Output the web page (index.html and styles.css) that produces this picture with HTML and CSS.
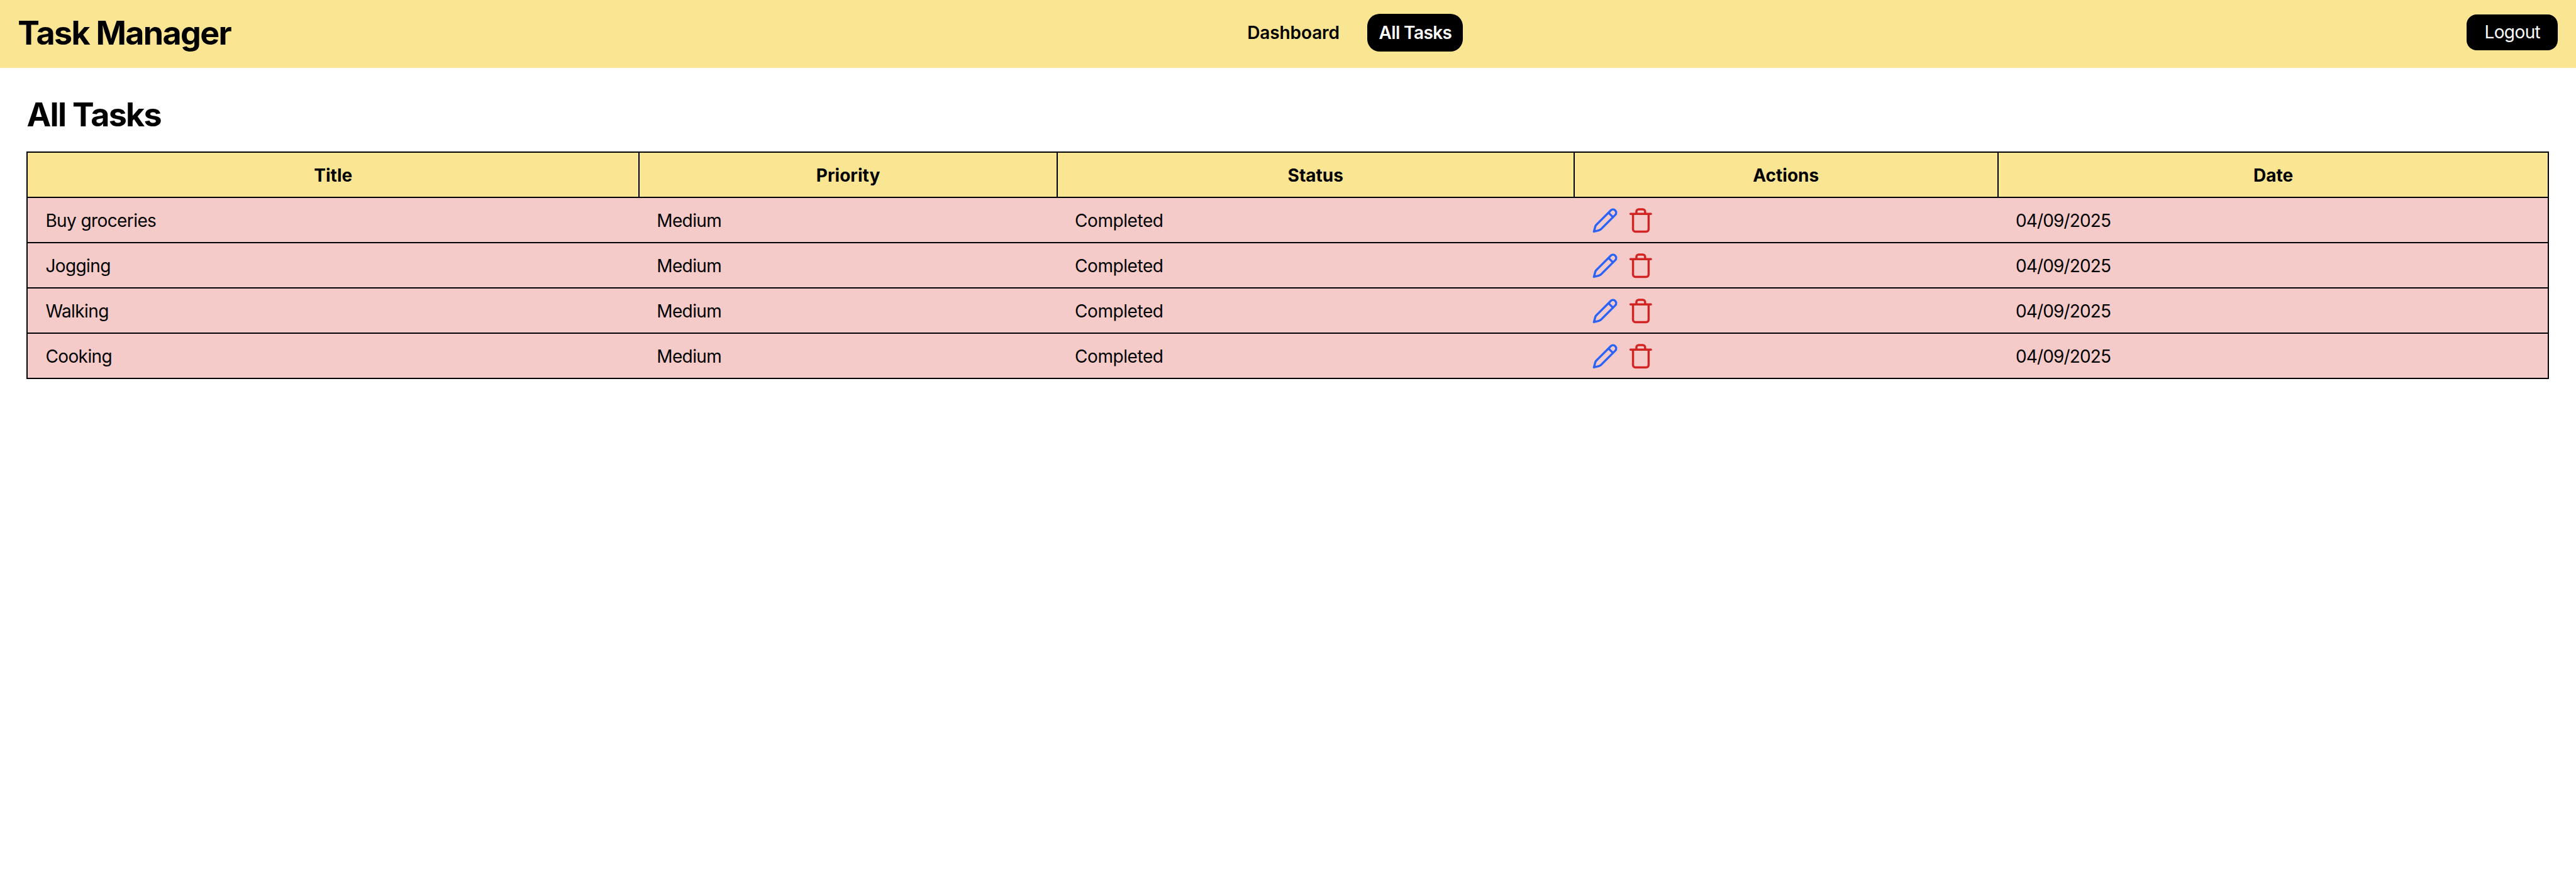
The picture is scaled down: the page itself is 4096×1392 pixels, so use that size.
FILE: index.html
```html
<!DOCTYPE html>
<html lang="en">
<head>
<meta charset="utf-8">
<title>Task Manager</title>
<link rel="stylesheet" href="styles.css">
</head>
<body>
<svg class="sprite" aria-hidden="true">
  <symbol id="pencil" viewBox="0 0 50 50">
    <path d="M36.8 4.3 A6.4 6.4 0 0 1 45.8 13.3 L17.2 41.9 Q15.5 43.500 13 44.200 L3 46.800 L5.700 37 Q6.300 34.800 8 33.100 Z M32 9.200 L41 18.200"/>
  </symbol>
  <symbol id="trash" viewBox="0 0 50 50">
    <path d="M2.100 11.500 H42.600 M7 11.500 V42.300 A4.500 4.500 0 0 0 11.500 46.800 H33.500 A4.500 4.500 0 0 0 38 42.300 V11.500 M13.700 11.500 V7 A4.500 4.500 0 0 1 18.200 2.500 H26.500 A4.500 4.500 0 0 1 31 7 V11.500"/>
  </symbol>
</svg>
<header class="topbar">
  <div class="brand">Task Manager</div>
  <nav class="nav">
    <a class="nav-link dashboard">Dashboard</a>
    <a class="nav-link active">All Tasks</a>
  </nav>
  <button class="logout">Logout</button>
</header>
<main class="page">
  <h1 class="heading">All Tasks</h1>
  <table class="tasks">
    <colgroup><col class="c-title"><col class="c-priority"><col class="c-status"><col class="c-actions"><col class="c-date"></colgroup>
    <thead><tr><th>Title</th><th>Priority</th><th>Status</th><th>Actions</th><th>Date</th></tr></thead>
    <tbody>
      <tr><td>Buy groceries</td><td>Medium</td><td class="status">Completed</td><td><div class="actions"><svg class="edit"><use href="#pencil"/></svg><svg class="delete"><use href="#trash"/></svg></div></td><td class="date">04/09/2025</td></tr>
      <tr><td>Jogging</td><td>Medium</td><td class="status">Completed</td><td><div class="actions"><svg class="edit"><use href="#pencil"/></svg><svg class="delete"><use href="#trash"/></svg></div></td><td class="date">04/09/2025</td></tr>
      <tr><td>Walking</td><td>Medium</td><td class="status">Completed</td><td><div class="actions"><svg class="edit"><use href="#pencil"/></svg><svg class="delete"><use href="#trash"/></svg></div></td><td class="date">04/09/2025</td></tr>
      <tr><td>Cooking</td><td>Medium</td><td class="status">Completed</td><td><div class="actions"><svg class="edit"><use href="#pencil"/></svg><svg class="delete"><use href="#trash"/></svg></div></td><td class="date">04/09/2025</td></tr>
    </tbody>
  </table>
</main>
</body>
</html>
```
FILE: styles.css
```css
* { box-sizing: border-box; }
body { margin: 0; background: #fff; color: #000; font: 28px/43px Inter, "Liberation Sans", sans-serif; letter-spacing: -0.6px; }
.sprite { display: none; }
.topbar { display: flex; justify-content: space-between; align-items: center; height: 108px; padding: 0 28.8px 5px 28.2px; background: #fae592; }
.brand { width: 341px; padding-top: 1px; white-space: nowrap; font-size: 52px; font-weight: 700; line-height: 65px; letter-spacing: -1.67px; }
.nav { display: flex; align-items: center; gap: 26.6px; }
.nav-link { height: 60px; padding: 0 18px; line-height: 60px; font-weight: 600; border-radius: 19.8px; }
.dashboard { letter-spacing: -0.12px; }
.nav-link.active { background: #000; color: #fff; }
.logout { width: 144.8px; height: 57px; padding: 0; border: 0; border-radius: 16px; background: #000; color: #fff; font: inherit; letter-spacing: inherit; }
.page { padding: 42px 43px 0 42.4px; }
.heading { margin: 0 0 26px; font-size: 52px; line-height: 65px; font-weight: 700; letter-spacing: -1.69px; }
.tasks { width: 4011px; table-layout: fixed; border-collapse: collapse; border: 2px solid #000; }
.c-title { width: 972.8px; }
.c-priority { width: 664.8px; }
.c-status { width: 821.6px; }
.c-actions { width: 674.4px; }
th, td { height: 72px; padding: 2px 28px 0; line-height: 43px; }
th { border: 2px solid #000; background: #fae592; font-weight: 700; letter-spacing: 0; text-align: center; }
td { border-bottom: 2px solid #000; background: #f5cbca; }
.status { letter-spacing: -0.42px; }
.date { letter-spacing: -0.86px; }
.actions { display: flex; gap: 19.2px; padding-left: 1px; }
.actions svg { width: 40px; height: 40px; overflow: visible; fill: none; stroke-width: 4.3; stroke-linecap: round; stroke-linejoin: round; }
.edit { stroke: #2b63f6; }
.delete { stroke: #d32424; }
```
